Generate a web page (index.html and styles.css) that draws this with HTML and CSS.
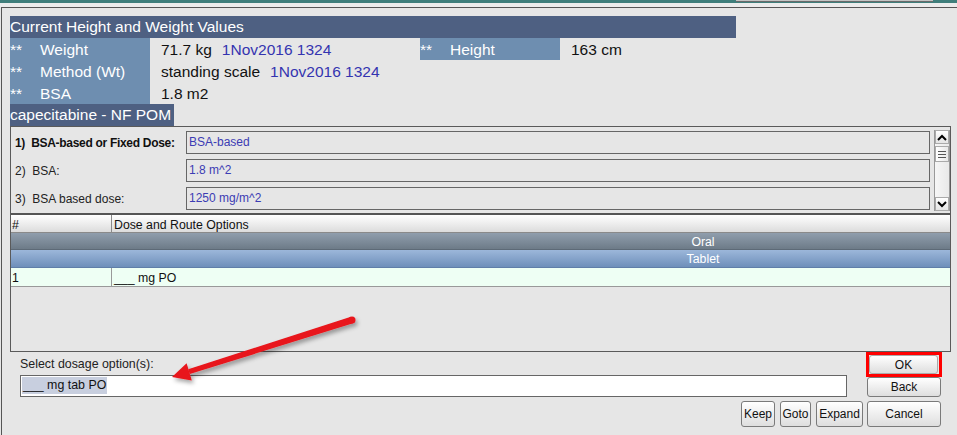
FILE: index.html
```html
<!DOCTYPE html>
<html>
<head>
<meta charset="utf-8">
<title>Dose</title>
<link rel="stylesheet" href="styles.css">
</head>
<body>
<div class="topstrip"><div class="winedge"></div></div>
<div class="sep"></div>
<div class="frame">
  <div class="hdr">Current Height and Weight Values</div>
  <div class="vitals">
    <div class="lbl"><span class="stars">**</span>Weight</div>
    <div class="val">71.7 kg<span class="date">1Nov2016 1324</span></div>
    <div class="lbl"><span class="stars">**</span>Height</div>
    <div class="val">163 cm</div>
    <div class="lbl"><span class="stars">**</span>Method (Wt)</div>
    <div class="val span3">standing scale<span class="date">1Nov2016 1324</span></div>
    <div class="lbl"><span class="stars">**</span>BSA</div>
    <div class="val span3">1.8 m2</div>
  </div>
  <div class="drug">capecitabine - NF POM</div>
  <div class="panel">
    <div class="questions">
      <div class="qlist">
        <div class="q"><div class="qlabel bold">1)&nbsp; BSA-based or Fixed Dose:</div><div class="qfield">BSA-based</div></div>
        <div class="q"><div class="qlabel">2)&nbsp; BSA:</div><div class="qfield">1.8 m^2</div></div>
        <div class="q"><div class="qlabel">3)&nbsp; BSA based dose:</div><div class="qfield">1250 mg/m^2</div></div>
      </div>
      <div class="vscroll">
        <div class="sbtn"><svg width="10" height="7" viewBox="0 0 10 7"><path d="M1 6 L5 2 L9 6" fill="none" stroke="#000" stroke-width="2"/></svg></div>
        <div class="thumb"><svg width="10" height="9" viewBox="0 0 10 9"><path d="M1 1.5H9M1 4.5H9M1 7.5H9" stroke="#555" stroke-width="1"/></svg></div>
        <div class="track"></div>
        <div class="sbtn"><svg width="10" height="7" viewBox="0 0 10 7"><path d="M1 1 L5 5 L9 1" fill="none" stroke="#000" stroke-width="2"/></svg></div>
      </div>
    </div>
    <div class="divider"></div>
    <div class="table">
      <div class="thead"><div class="c1">#</div><div class="c2">Dose and Route Options</div></div>
      <div class="band oral">Oral</div>
      <div class="band tablet">Tablet</div>
      <div class="trow"><div class="c1">1</div><div class="c2">___ mg PO</div></div>
    </div>
  </div>
  <div class="bottom">
    <div class="entry">
      <div class="elabel">Select dosage option(s):</div>
      <div class="einput"><span class="sel">___ mg tab PO</span></div>
    </div>
    <div class="okbox"><div class="btn okbtn">OK</div></div>
    <div class="btn back">Back</div>
    <div class="smallbtns">
      <div class="btn keep">Keep</div>
      <div class="btn goto">Goto</div>
      <div class="btn expand">Expand</div>
    </div>
    <div class="btn cancel">Cancel</div>
  </div>
</div>
<svg class="arrow" width="957" height="435" viewBox="0 0 957 435">
  <defs>
    <filter id="sh" x="-20%" y="-60%" width="140%" height="220%">
      <feDropShadow dx="2" dy="3" stdDeviation="2" flood-color="#000" flood-opacity="0.35"/>
    </filter>
  </defs>
  <g filter="url(#sh)" fill="#e8141a">
    <polygon points="353.06,323.34 350.94,316.66 188.25,369.22 189.75,373.98"/>
    <circle cx="352" cy="320" r="3.5"/>
    <polygon points="172,377 191.8,380.5 186.6,363.2"/>
  </g>
</svg>
</body>
</html>
```

FILE: styles.css
```css
* { box-sizing: border-box; }
html, body { margin: 0; padding: 0; }
body {
  width: 957px;
  height: 435px;
  overflow: hidden;
  background: #e6e6e6;
  font-family: "Liberation Sans", Arial, sans-serif;
  color: #111;
  position: relative;
}
.topstrip { height: 3px; background: #3f7e7b; }
.winedge {
  margin-left: 736px;
  width: 197px;
  height: 2px;
  background: #c4c4c4;
  border-bottom: 1px solid #6a6a6a;
}
.sep { height: 4px; background: #ececec; }
.frame {
  margin-left: 1px;
  border-top: 1px solid #555;
  border-left: 1px solid #555;
  padding: 8px 0 0 8px;
  height: 428px;
}
.hdr {
  width: 726px;
  height: 22px;
  background: #4e6082;
  color: #fff;
  font-size: 15.5px;
  line-height: 22px;
  white-space: nowrap;
}
.vitals {
  display: grid;
  grid-template-columns: 140px 270px 140px 200px;
  grid-auto-rows: 22px;
  font-size: 15.5px;
  line-height: 22px;
}
.lbl { background: #6e8eb0; color: #fff; white-space: nowrap; padding-top: 1px; }
.stars { display: inline-block; width: 30px; }
.val { padding-left: 11px; padding-top: 1px; white-space: nowrap; color: #111; }
.span3 { grid-column: span 3; }
.date { color: #3434b0; margin-left: 10px; }
.drug {
  width: 164px;
  height: 22px;
  background: #4e6082;
  color: #fff;
  font-size: 15.5px;
  line-height: 22px;
  white-space: nowrap;
}
.panel {
  width: 941px;
  border: 1px solid #5a5a5a;
  font-size: 12.3px;
}
.questions { display: flex; height: 86px; }
.qlist {
  width: 923px;
  padding-top: 4px;
  display: flex;
  flex-direction: column;
  gap: 5px;
  font-size: 12px;
}
.q { display: flex; align-items: center; height: 23px; }
.qlabel { width: 175px; padding-left: 4px; padding-top: 1px; white-space: nowrap; color: #222; }
.bold { font-weight: bold; color: #111; letter-spacing: -0.3px; }
.qfield {
  width: 744px;
  height: 23px;
  border: 1px solid #666;
  color: #3c3cb4;
  padding-left: 2px;
  line-height: 21px;
}
.vscroll {
  width: 16px;
  margin-top: 3px;
  margin-bottom: 2px;
  border-left: 1px solid #999;
  border-right: 1px solid #999;
  background: linear-gradient(to right, #f6f6f6, #e9e9e9);
  display: flex;
  flex-direction: column;
}
.sbtn {
  height: 14px;
  background: linear-gradient(#ffffff, #e4e4e4);
  border: 1px solid #aaa;
  display: flex;
  align-items: center;
  justify-content: center;
}
.thumb {
  height: 16px;
  margin-top: 2px;
  background: linear-gradient(to right, #ffffff, #e8e8e8);
  border: 1px solid #aaa;
  display: flex;
  align-items: center;
  justify-content: center;
}
.track { flex: 1; }
.divider { height: 2px; background: #555; }
.table { height: 136px; }
.thead {
  display: flex;
  height: 18px;
  background: linear-gradient(#ffffff, #dcdcdc);
  border-bottom: 1px solid #8a8a8a;
  line-height: 17px;
  padding-top: 2px;
}
.thead .c1, .thead .c2 { margin-top: -2px; padding-top: 2px; }
.c1 { width: 101px; padding-left: 1px; border-right: 1px solid #8a8a8a; }
.c2 { padding-left: 2px; }
.band {
  color: #fff;
  text-align: center;
  padding-left: 445px;
  line-height: 17px;
  padding-top: 1px;
}
.oral {
  height: 17px;
  background: linear-gradient(#909ead, #6d7b88);
  border-bottom: 1px solid #5d6a77;
}
.tablet {
  height: 18px;
  background: linear-gradient(#9cb7da, #6e8fba);
  border-bottom: 1px solid #5f7ea8;
}
.trow {
  display: flex;
  height: 19px;
  background: #eefff4;
  border-bottom: 1px solid #999;
  line-height: 18px;
}
.trow .c1, .trow .c2 { padding-top: 1px; }
.trow .c1 { border-right: 1px solid #999; }
.bottom {
  margin-left: 10px;
  display: grid;
  grid-template-columns: 846px 76px;
  grid-template-rows: 25px 20px 30px;
  font-size: 12px;
}
.entry { grid-row: 1 / span 2; grid-column: 1; }
.elabel { margin-top: 5px; line-height: 15px; color: #222; font-size: 12.4px; }
.einput {
  margin-top: 3px;
  width: 827px;
  height: 22px;
  background: #fff;
  border: 1px solid #666;
  padding: 1px;
  font-size: 12.4px;
}
.sel {
  display: inline-block;
  background: #c8cfdf;
  line-height: 17px;
  padding: 0 1px;
}
.btn {
  background: linear-gradient(#ffffff, #dedede);
  border: 1px solid #7a7a7a;
  border-radius: 3px;
  display: flex;
  align-items: center;
  justify-content: center;
  color: #111;
}
.okbox {
  grid-row: 1;
  grid-column: 2;
  border: 3px solid #f00;
  padding: 0 1px 0 0;
}
.okbtn { height: 100%; border-color: #aaa; }
.back { grid-row: 2; grid-column: 2; margin-left: 1px; width: 74px; }
.smallbtns {
  grid-row: 3;
  grid-column: 1;
  margin-top: 4px;
  display: flex;
  justify-content: flex-end;
  gap: 5px;
  padding-right: 3px;
}
.keep { width: 34px; }
.goto { width: 31px; }
.expand { width: 47px; }
.cancel { grid-row: 3; grid-column: 2; margin-top: 4px; margin-left: 1px; width: 74px; }
.arrow { position: absolute; left: 0; top: 0; pointer-events: none; }
```
